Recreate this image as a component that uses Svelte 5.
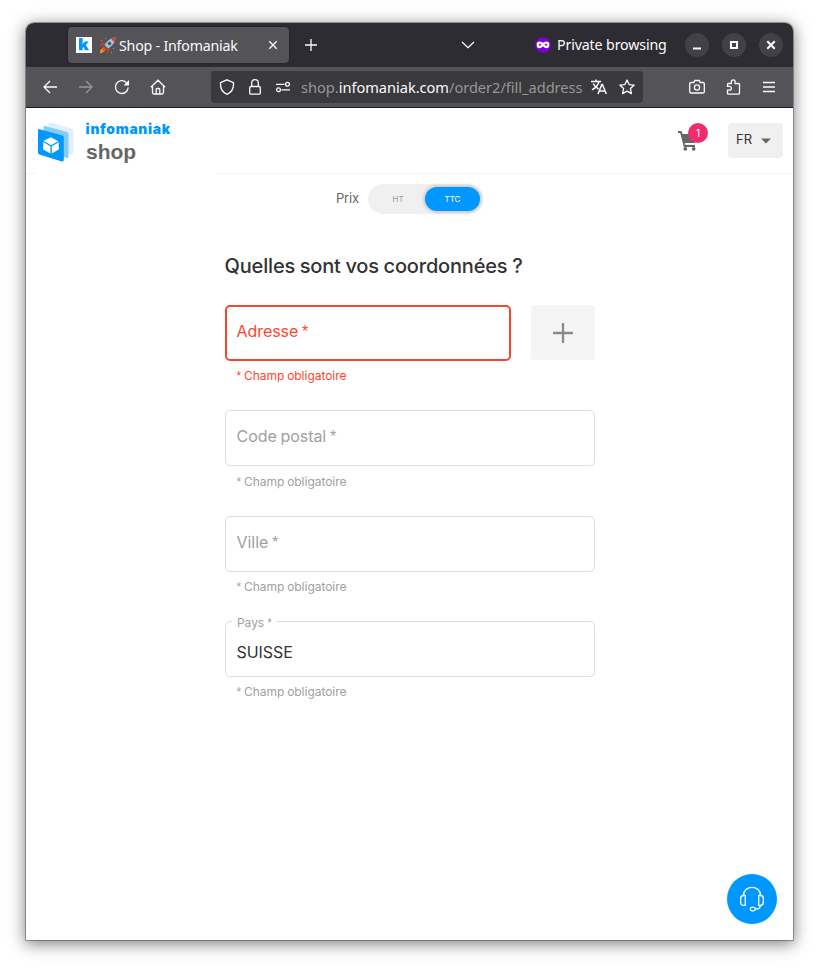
<script>
  const fields = [
    { label: 'Adresse', error: true, add: true },
    { label: 'Code postal' },
    { label: 'Ville' },
    { label: 'Pays', value: 'SUISSE' }
  ];
</script>

{#snippet star()}<span class="star">*</span>{/snippet}

<div class="desktop">
  <div class="window">
    <div class="tabs">
      <div class="tab">
        <svg class="fav" width="16" height="16" viewBox="0 0 16 16"><path fill="#fff" d="M0 0h16v16H0z"/><path fill="#0098ff" d="M3 1h3.600v6.200L9 4.400h3.900L9.800 8l3.400 5.200H9.100L7.400 10l-.8.8v2.400H3z"/></svg>
        <svg class="rocket" width="17" height="17" viewBox="0 0 17 17">
          <path d="M6 5 2.500 6 .5 9.500 5 8.500zM11 10l-.7 4.200-3 2.200L8 12z" fill="#d9342b"/>
          <path d="M16.500.5c-4 0-8 2.500-11 7.500l3.500 3.500c4.500-2.500 7.500-6.500 7.500-11z" fill="#9cc3d5"/>
          <path d="M16.500.5c-1.600 0-3.200.4-4.700 1.200l3.500 3.500c.8-1.500 1.200-3 1.200-4.700z" fill="#e53935"/>
          <circle cx="10.500" cy="6.500" r="1.700" fill="#35596d"/>
          <path d="m5 10-3.500 3L1 16.500 4.500 15 7 12z" fill="#f59b23"/><path d="m5 10 2 2-4 2.500z" fill="#e23b2e"/>
          <path d="M2 3h1v1H2zM6 1h1v1H6zM14 11h1v1h-1zM12 15h1v1h-1z" fill="#9a9aa0"/>
        </svg>
        <span class="tabtitle">Shop - Infomaniak</span>
        <svg class="tabclose" width="10" height="10" viewBox="0 0 10 10"><path d="m1.300 1.300 7.400 7.400M8.700 1.300 1.300 8.700" stroke="#fbfbfe" stroke-width="1.300"/></svg>
      </div>
      <svg class="newtab" width="12" height="12" viewBox="0 0 12 12"><path d="M6 0v12M0 6h12" stroke="#fbfbfe" stroke-width="1.300"/></svg>
      <svg class="alltabs" width="14" height="8" viewBox="0 0 14 8"><path d="m1 1 6 5.700L13 1" fill="none" stroke="#fbfbfe" stroke-width="1.300"/></svg>
      <svg class="mask" width="16" height="16" viewBox="0 0 16 16"><circle cx="8" cy="8" r="7.700" fill="#8000d7"/><path fill="#fff" fill-rule="evenodd" d="M1.700 6.200Q2.300 4.400 4.700 4.500 7 4.700 8 5.700q1-1 3.300-1.200 2.400-.1 3 1.700v2.500q-.4 2.600-2.900 2.600Q9.600 11.300 8 9.200 6.400 11.300 4.600 11.300 2.100 11.300 1.700 8.700zM3.400 7.800q1.600 1.800 3.200 0-1.600-1.800-3.200 0m6 0q1.600 1.800 3.200 0-1.600-1.800-3.200 0"/></svg>
      <span class="private">Private browsing</span>
      <div class="controls">
        <i><svg width="24" height="24"><path d="M8 15.500h8" stroke="#fff" stroke-width="2"/></svg></i>
        <i><svg width="24" height="24"><path d="M9 9h6v6H9z" fill="none" stroke="#fff" stroke-width="2"/></svg></i>
        <i><svg width="24" height="24"><path d="m8.300 8.300 7.400 7.400m0-7.400-7.400 7.400" stroke="#fff" stroke-width="2"/></svg></i>
      </div>
    </div>

    <div class="nav">
      <svg class="back" width="16" height="16" viewBox="0 0 16 16"><path d="M15 8H2m6-6L2 8l6 6" class="ln"/></svg>
      <svg class="fwd" width="16" height="16" viewBox="0 0 16 16"><path d="M1 8h13M8 2l6 6-6 6" class="ln"/></svg>
      <svg class="reload" width="16" height="16" viewBox="0 0 16 16"><path d="M14.200 8.500A6.400 6.400 0 1 1 12.500 3.700" class="ln"/><path d="M15 1v5.500H9.500z" fill="#fbfbfe"/></svg>
      <svg class="home" width="16" height="16" viewBox="0 0 16 16"><path d="M.8 8.200 8 1.200l7.200 7M2.500 7v6.500q0 1.500 1.500 1.500h8q1.500 0 1.500-1.500V7M6.200 15V10.500q0-1 1-1h1.600q1 0 1 1V15" class="ln"/></svg>
      <div class="url">
        <svg width="16" height="16" viewBox="0 0 16 16"><path d="M8 .8 14.500 3.600c.3 4.500-1.300 9.500-6.500 11.700C2.800 13.100 1.200 8.100 1.500 3.600z" class="ln"/></svg>
        <svg width="16" height="16" viewBox="0 0 16 16"><rect x="2.700" y="7.500" width="10.600" height="7.700" rx="1.300" class="ln"/><path d="M4.700 7.500V4a3.300 3.300 0 0 1 6.600 0v3.500" class="ln"/></svg>
        <svg width="16" height="16" viewBox="0 0 16 16"><path d="M1 5.300h8.500M6.500 10.800H15" class="ln"/><circle cx="12.500" cy="5.300" r="1.900" class="ln"/><circle cx="3.500" cy="10.800" r="1.900" class="ln"/></svg>
        <span class="address">shop.<b>infomaniak.com</b>/order2/fill_address</span>
        <svg class="translate" width="16" height="16" viewBox="0 0 16 16"><path d="M0 2.500h10M5 .5v2M8 2.500C7 6.500 4 9.300 1 10.800M2.200 4.500C3.500 7.300 5.500 9 7.500 10M7 15l3.800-9.500h.6L15.300 15M8.200 12h5.800" fill="none" stroke="#fbfbfe" stroke-width="1.500"/></svg>
        <svg width="16" height="16" viewBox="0 0 16 16"><path d="m8 1 2.100 4.600 5 .6-3.700 3.400 1 5L8 12.100l-4.400 2.500 1-5L.9 6.200l5-.6z" class="ln" stroke-linejoin="round"/></svg>
      </div>
      <svg class="camera" width="16" height="16" viewBox="0 0 16 16"><path d="M2 3.500h2.800l1-2h4.400l1 2H14q1.300 0 1.300 1.300v7.900q0 1.300-1.300 1.300H2Q.7 14 .7 12.700V4.800Q.7 3.500 2 3.500z" class="ln"/><circle cx="8" cy="8.500" r="2.600" class="ln"/></svg>
      <svg class="puzzle" width="16" height="16" viewBox="0 0 16 16"><path d="M6.300 4.500V2.800a1.900 1.900 0 0 1 3.800 0v1.700H13.500q1 0 1 1v8.700q0 1-1 1H3.500q-1 0-1-1v-3h2a1.900 1.900 0 0 0 0-3.800H2.500V5.500q0-1 1-1z" class="ln"/></svg>
      <svg class="menu" width="16" height="16" viewBox="0 0 16 16"><path d="M2 3.500h12M2 8h12M2 12.500h12" class="ln"/></svg>
    </div>

    <header>
      <div class="brand">
        <svg width="36" height="41" viewBox="0 0 36 41">
          <path d="M10.500 1.500Q10.500-.2 12 .2L34 6.500q1.500.5 1.500 2v22.500q0 1.800-1.500 1.500L11 27z" fill="#dff1ff"/>
          <path d="M5.500 5Q5.500 3.500 7 4L29 10q1.500.5 1.500 2v22.500q0 2-1.500 1.500L6 30z" fill="#85caff"/>
          <path d="M0 8.500Q0 6.800 1.500 7.200L24.500 13.500q1.300.4 1.300 1.800v22.500q0 2-1.800 1.600L1.300 32.500Q0 32 0 30.500z" fill="#0098ff"/>
          <path d="m13 15.200 7.300 4-7.300 4-7.600-4.400zM5.200 20l7.200 4.200v7.400l-7.200-4zM20.800 20.200v7.300l-7 4.100v-7.400z" fill="#fff"/>
        </svg>
        <div class="names"><span class="company">infomaniak</span><span class="product">shop</span></div>
      </div>
      <div class="cart">
        <svg width="20" height="21" viewBox="0 0 20 21"><path d="M0 1h3.500l1 3H18l-1 9H7.300l.5 1.800H17V17H5.800L2.200 3H0z" fill="#666"/><path d="M6.500 14h10" stroke="#fff"/><circle cx="7.300" cy="18.800" r="1.900" fill="#666"/><circle cx="15.700" cy="18.800" r="1.900" fill="#666"/></svg>
        <span class="badge">1</span>
      </div>
      <div class="lang">FR<svg width="10" height="6"><path d="M0 .5h10L5 5.500z" fill="#666"/></svg></div>
    </header>

    <div class="price">
      <span class="prix">Prix</span>
      <div class="switch"><span class="ht">HT</span><span class="ttc">TTC</span></div>
    </div>

    <main>
      <h1>Quelles sont vos coordonnées ?</h1>
      {#each fields as f}
        <div class="field" class:error={f.error}>
          <div class="row">
            <div class="box" class:filled={f.value}>
              {#if f.value}
                <span class="float">{f.label} {@render star()}</span><span class="value">{f.value}</span>
              {:else}
                <span class="label">{f.label} {@render star()}</span>
              {/if}
            </div>
            {#if f.add}
              <div class="add"><svg width="20" height="20"><path d="M10 0v20M0 10h20" stroke="#8a8a8a" stroke-width="2.300"/></svg></div>
            {/if}
          </div>
          <div class="hint">{@render star()} Champ obligatoire</div>
        </div>
      {/each}
    </main>

    <div class="help">
      <svg width="26" height="26" viewBox="0 0 26 26" fill="none" stroke="#fff" stroke-width="1.300"><path d="M4.500 9.500V9A8.500 7.700 0 0 1 21.500 9v.5"/><path d="M6.300 9.500v9.800H4.500q-2.800 0-2.800-2.800v-4q0-3 2.800-3zM19.700 9.500v9.800h1.800q2.800 0 2.800-2.800v-4q0-3-2.800-3z"/><path d="M21.300 19.300q0 3.700-3.300 3.700h-1.500"/><rect x="11.300" y="21.300" width="5" height="3.500" rx="1.700"/></svg>
    </div>
  </div>
</div>

<style>
  :global(body) { background: #fff; }
  * { box-sizing: border-box; }
  svg { display: block; flex: none; }
  .desktop { width: 819px; height: 969px; padding: 23px 26px 29px; overflow: hidden; background: #fff; }
  .window { position: relative; width: 767px; height: 917px; background: #fff; border-radius: 8px 8px 0 0; box-shadow: 0 0 0 1px rgba(0,0,0,.3), 0 3px 16px 1px rgba(0,0,0,.5); font-family: Inter, "Liberation Sans", sans-serif; color: #333; }
  .ln { fill: none; stroke: #fbfbfe; stroke-width: 1.3; }
  .tabs { height: 44px; display: flex; align-items: center; background: #2d2c32; border-radius: 8px 8px 0 0; color: #fbfbfe; font: 14.2px/20px "Noto Sans", sans-serif; letter-spacing: -.2px; }
  .tab { width: 221px; height: 36px; margin-left: 42px; padding: 0 11px 0 8px; display: flex; align-items: center; background: #545358; border-radius: 4px; box-shadow: 0 0 2px #0009; }
  .rocket { margin-left: 7px; }
  .tabtitle { margin-left: 3px; width: 120px; padding-top: 2px; white-space: nowrap; }
  .tabclose { margin-left: auto; }
  .newtab { margin-left: 16px; }
  .alltabs { margin-left: 144px; }
  .mask { margin-left: 60px; }
  .private { margin-left: 6px; width: 110px; white-space: nowrap; letter-spacing: -.13px; }
  .controls { margin-left: 18px; display: flex; gap: 13px; }
  .controls i { width: 24px; height: 24px; border-radius: 50%; background: #424147; }
  .nav { height: 41px; display: flex; align-items: center; background: #545358; border-bottom: 1px solid #1c1b22; }
  .back { margin-left: 16px; }
  .fwd { margin-left: 20px; opacity: .4; }
  .reload { margin-left: 20px; }
  .home { margin-left: 20px; }
  .url { width: 432px; height: 32px; margin-left: 45px; padding: 0 8px; display: flex; align-items: center; gap: 12px; background: #3a393c; border-radius: 4px; }
  .address { width: 283px; margin-left: -2px; margin-right: -5px; font: 14.6px/20px "Noto Sans", sans-serif; letter-spacing: -.02px; color: #97969a; white-space: nowrap; }
  .address b { font-weight: 400; color: #fbfbfe; }
  .camera { margin-left: 46px; }
  .puzzle { margin-left: 20px; }
  .menu { margin-left: 20px; }
  header { height: 66px; display: flex; align-items: flex-start; padding: 14px 10px 0 12px; background: linear-gradient(90deg, #f2f4fb 10px, #fff 10px 190px, #f2f4fb 190px) bottom / 100% 1px no-repeat; }
  .brand { display: flex; width: 640px; }
  .names { margin-left: 12px; display: flex; flex-direction: column; font-family: "Liberation Sans", Arial, sans-serif; font-weight: 700; }
  .company { font: 900 13.8px/14px Inter, sans-serif; letter-spacing: .7px; margin-left: -.4px; color: #0098ff; width: 88px; white-space: nowrap; }
  .product { margin-top: 4px; font-size: 21px; line-height: 24px; color: #666; }
  .cart { position: relative; width: 50px; padding-top: 8px; }
  .badge { position: absolute; left: 10px; top: 1px; width: 20px; height: 20px; border-radius: 50%; background: #ef2c6d; color: #fff; font-size: 10px; line-height: 20px; text-align: center; }
  .lang { width: 55px; height: 35px; margin-top: 1px; padding: 0 12px 0 8px; display: flex; align-items: flex-start; justify-content: space-between; background: #f0f0f0; border-radius: 4px; font-size: 13px; line-height: 32px; }
  .lang svg { margin-top: 15px; }
  .price { height: 70px; padding: 10px 0 0 310px; display: flex; align-items: flex-start; }
  .prix { width: 32px; font-size: 13px; line-height: 29px; letter-spacing: -.2px; color: #666; }
  .switch { width: 115px; height: 30px; padding: 3px 3px 3px 0; display: flex; border-radius: 15px; background: #f0f0f0; font-size: 8px; line-height: 24px; text-align: center; }
  .ht { width: 57px; padding-left: 3px; color: #999; }
  .ttc { width: 55px; border-radius: 12px; background: #0098ff; color: #fff; box-shadow: 0 0 5px #0005; }
  main { width: 370px; margin-left: 199px; }
  h1 { margin: 0 0 25px; padding-top: 8px; height: 36px; font-size: 20px; line-height: 28px; font-weight: 500; letter-spacing: -.17px; word-spacing: -.5px; text-indent: -.5px; color: #333; white-space: nowrap; }
  .field { height: 105.33px; color: #9f9f9f; }
  .row { display: flex; gap: 20px; }
  .box { position: relative; flex: 1; height: 56px; border: 1px solid #dedede; border-radius: 5px; padding: 14px 10.5px; font-size: 16px; line-height: 22px; word-spacing: -.7px; letter-spacing: -.05px; }
  .error { color: #f9472f; }
  .error .box { border: 2px solid #f9472f; padding: 13px 9.5px; }
  .box.filled { padding-top: 19px; }
  .value { color: #333; }
  .star { font-family: "Liberation Sans", Arial, sans-serif; line-height: 1; }
  .float { position: absolute; left: 6px; top: -8px; padding: 0 4px 0 5px; background: #fff; font-size: 12px; line-height: 18px; word-spacing: -.3px; }
  .add { width: 64px; height: 55px; display: flex; align-items: center; justify-content: center; background: #f5f5f5; border-radius: 3px; }
  .hint { padding: 6.4px 0 0 11.5px; font-size: 12px; line-height: 18px; word-spacing: -.5px; letter-spacing: -.03px; }
  .help { position: absolute; right: 16px; bottom: 16px; width: 50px; height: 50px; border-radius: 50%; background: #0098ff; display: flex; align-items: center; justify-content: center; }
</style>
